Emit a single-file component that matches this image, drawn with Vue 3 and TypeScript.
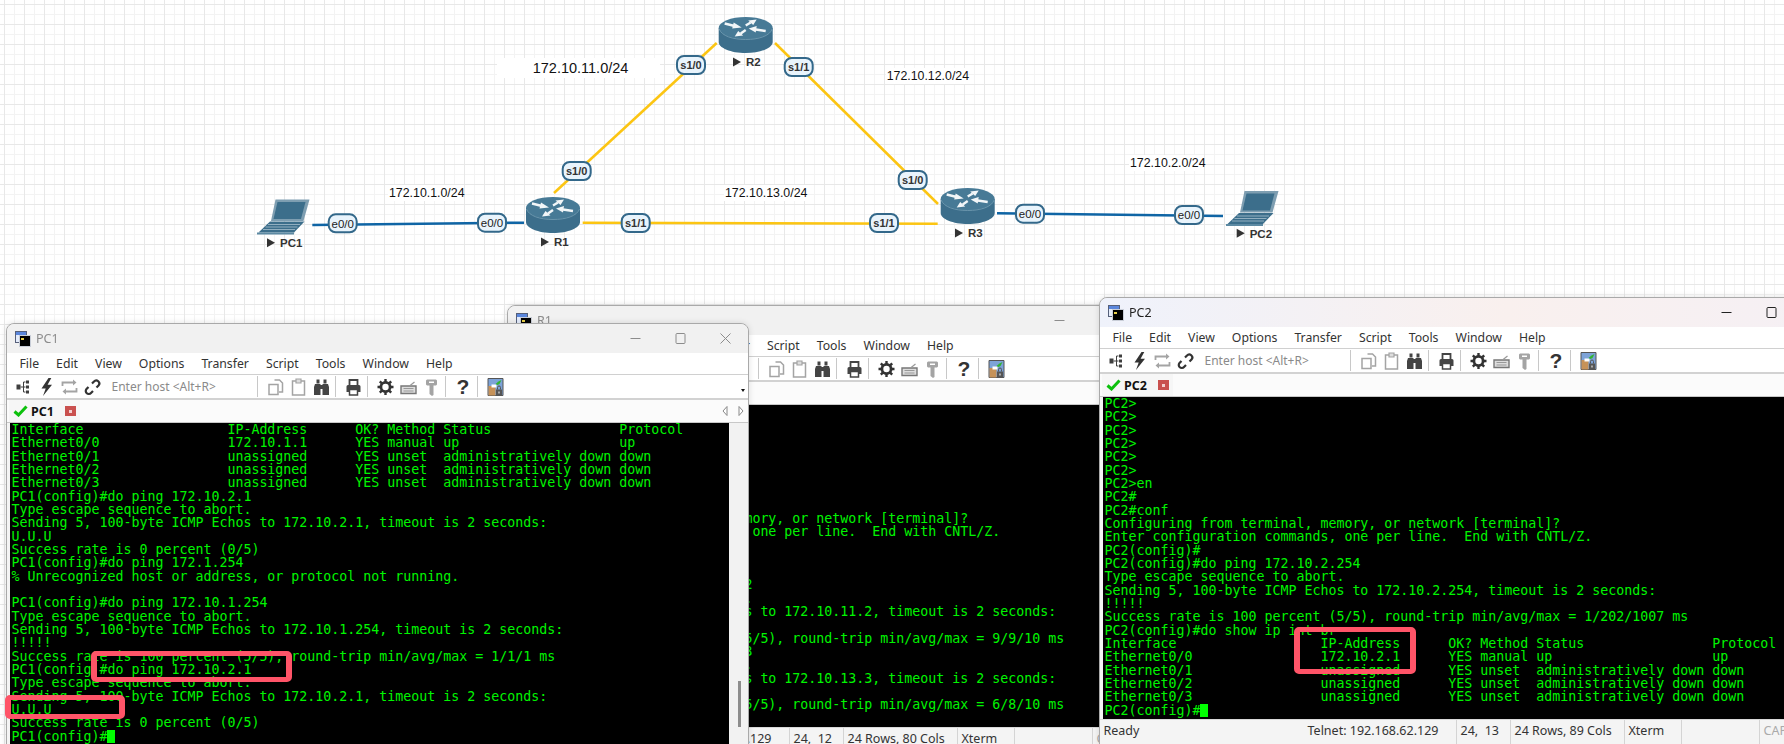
<script setup lang="ts">
type Shape = { d: string; fill?: string; stroke?: string; sw?: number }
type Tool = { key: string; shapes?: Shape[]; sep?: boolean; glyph?: string }

const ipRow = (name: string, ip: string, method: string, status: string, proto: string) =>
  name.padEnd(27) + ip.padEnd(16) + 'YES ' + method.padEnd(7) + status.padEnd(22) + proto

const header = 'Interface'.padEnd(27) + 'IP-Address'.padEnd(16) + 'OK? Method Status'.padEnd(33) + 'Protocol'
const adminDown = 'administratively down'

const pc1Lines = [
  header,
  ipRow('Ethernet0/0', '172.10.1.1', 'manual', 'up', 'up'),
  ipRow('Ethernet0/1', 'unassigned', 'unset', adminDown, 'down'),
  ipRow('Ethernet0/2', 'unassigned', 'unset', adminDown, 'down'),
  ipRow('Ethernet0/3', 'unassigned', 'unset', adminDown, 'down'),
  'PC1(config)#do ping 172.10.2.1',
  'Type escape sequence to abort.',
  'Sending 5, 100-byte ICMP Echos to 172.10.2.1, timeout is 2 seconds:',
  'U.U.U',
  'Success rate is 0 percent (0/5)',
  'PC1(config)#do ping 172.1.254',
  '% Unrecognized host or address, or protocol not running.',
  '',
  'PC1(config)#do ping 172.10.1.254',
  'Type escape sequence to abort.',
  'Sending 5, 100-byte ICMP Echos to 172.10.1.254, timeout is 2 seconds:',
  '!!!!!',
  'Success rate is 100 percent (5/5), round-trip min/avg/max = 1/1/1 ms',
  'PC1(config)#do ping 172.10.2.1',
  'Type escape sequence to abort.',
  'Sending 5, 100-byte ICMP Echos to 172.10.2.1, timeout is 2 seconds:',
  'U.U.U',
  'Success rate is 0 percent (0/5)',
  'PC1(config)#'
]

const r1Lines = [
  'R1>', 'R1>', 'R1>', 'R1>', 'R1>', 'R1>', 'R1>en', 'R1#conf',
  'Configuring from terminal, memory, or network [terminal]?',
  'Enter configuration commands, one per line.  End with CNTL/Z.',
  'R1(config)#',
  'R1(config)#',
  'R1(config)#',
  'R1(config)#do ping 172.10.11.2',
  'Type escape sequence to abort.',
  'Sending 5, 100-byte ICMP Echos to 172.10.11.2, timeout is 2 seconds:',
  '!!!!!',
  'Success rate is 100 percent (5/5), round-trip min/avg/max = 9/9/10 ms',
  'R1(config)#do ping 172.10.13.3',
  'Type escape sequence to abort.',
  'Sending 5, 100-byte ICMP Echos to 172.10.13.3, timeout is 2 seconds:',
  '!!!!!',
  'Success rate is 100 percent (5/5), round-trip min/avg/max = 6/8/10 ms',
  'R1(config)#'
]

const pc2Lines = [
  'PC2>', 'PC2>', 'PC2>', 'PC2>', 'PC2>', 'PC2>', 'PC2>en', 'PC2#', 'PC2#conf',
  'Configuring from terminal, memory, or network [terminal]?',
  'Enter configuration commands, one per line.  End with CNTL/Z.',
  'PC2(config)#',
  'PC2(config)#do ping 172.10.2.254',
  'Type escape sequence to abort.',
  'Sending 5, 100-byte ICMP Echos to 172.10.2.254, timeout is 2 seconds:',
  '!!!!!',
  'Success rate is 100 percent (5/5), round-trip min/avg/max = 1/202/1007 ms',
  'PC2(config)#do show ip int br',
  header,
  ipRow('Ethernet0/0', '172.10.2.1', 'manual', 'up', 'up'),
  ipRow('Ethernet0/1', 'unassigned', 'unset', adminDown, 'down'),
  ipRow('Ethernet0/2', 'unassigned', 'unset', adminDown, 'down'),
  ipRow('Ethernet0/3', 'unassigned', 'unset', adminDown, 'down'),
  'PC2(config)#'
]

const menus = ['File', 'Edit', 'View', 'Options', 'Transfer', 'Script', 'Tools', 'Window', 'Help']

const dark = '#3f3f3f'
const soft = '#a4a4a4'

const leftTools: Tool[] = [
  {
    key: 'connect',
    shapes: [
      { d: 'M3 7.500h4v5H3z', fill: dark },
      { d: 'M7 10h5M10 5v10M10 5h2M10 15h2', stroke: dark, sw: 1 },
      { d: 'M12.500 3.500h3v3h-3zM12.500 8.500h3v3h-3zM12.500 13.500h3v3h-3z', fill: dark }
    ]
  },
  { key: 'bolt', shapes: [{ d: 'M12 1 5 11.500h4.200L6.500 19 15.500 7.800h-4.400L14.800 1z', fill: '#333' }] },
  {
    key: 'reconnect',
    shapes: [
      { d: 'M3 9V5.500h12.500M17 11v3.500H4.500', stroke: soft, sw: 1.8 },
      { d: 'M13.500 2.500 17 5.500l-3.500 3zM6.500 11.500 3 14.500l3.500 3z', fill: soft }
    ]
  },
  {
    key: 'chain',
    shapes: [
      { d: 'M9.500 6.500 11.500 4.500a3 3 0 0 1 4.500 4L14 10.500', stroke: '#333', sw: 2.2 },
      { d: 'M10.500 14 8.500 16a3 3 0 0 1-4.500-4L6 10', stroke: '#333', sw: 2.2 }
    ]
  }
]

const rightTools: Tool[] = [
  { key: 's1', sep: true },
  {
    key: 'copy',
    shapes: [
      { d: 'M9 3h5l3 3v9h-3.500', stroke: soft, sw: 1.5 },
      { d: 'M3.500 7.500h9v10h-9z', stroke: soft, sw: 1.5, fill: '#fff' }
    ]
  },
  {
    key: 'paste',
    shapes: [
      { d: 'M4 4h12v14H4z', stroke: soft, sw: 1.5, fill: '#fff' },
      { d: 'M7.500 2h5v4h-5z', stroke: soft, sw: 1.2, fill: '#ddd' }
    ]
  },
  {
    key: 'bino',
    shapes: [
      {
        d: 'M5 2.500h3v4H5zM12 2.500h3v4h-3zM3.500 7h5.500v11H2.500V10zM11 7h5.500l1 3v8H11zM9 8h2v4H9z',
        fill: '#444'
      }
    ]
  },
  { key: 's2', sep: true },
  {
    key: 'print',
    shapes: [
      { d: 'M6 8V3h8v5', stroke: '#444', sw: 1.8 },
      { d: 'M4.500 8h11A1.500 1.500 0 0 1 17 9.500V15H3V9.500A1.500 1.500 0 0 1 4.500 8z', fill: '#444' },
      { d: 'M6 12.500h8V18H6z', fill: '#fff', stroke: '#444', sw: 1.5 }
    ]
  },
  { key: 's3', sep: true },
  {
    key: 'gear',
    shapes: [
      { d: 'M10 2v16M2 10h16M4.300 4.300l11.400 11.400M15.700 4.300 4.300 15.700', stroke: '#333', sw: 2.4 },
      { d: 'M10 4a6 6 0 1 0 0 12 6 6 0 0 0 0-12z', fill: '#333' },
      { d: 'M10 6.800a3.200 3.200 0 1 0 0 6.400 3.200 3.200 0 0 0 0-6.400z', fill: '#fff' }
    ]
  },
  {
    key: 'kbd',
    shapes: [
      { d: 'M2.500 9h15v7.500h-15z', fill: '#ddd', stroke: '#777', sw: 1.4 },
      { d: 'M5 11.500h10M5 14h10', stroke: '#999', sw: 1.2 },
      { d: 'M11 9 16 5', stroke: '#999', sw: 1.2 }
    ]
  },
  {
    key: 'key',
    shapes: [
      {
        d: 'M5.500 2.500h9l1 1v4l-1 1H12v9.500l-1.500 1L8 17V8.500H5.500l-1-1v-4z',
        fill: soft
      },
      { d: 'M7.500 4.500h5v1.500h-5z', fill: '#fff' }
    ]
  },
  { key: 's4', sep: true },
  { key: 'help', glyph: '?' },
  { key: 's5', sep: true },
  {
    key: 'sftp',
    shapes: [
      { d: 'M2.500 1.500h15v17h-15z', fill: '#7da3d8', stroke: '#555', sw: 1 },
      { d: 'M3 9h7v9.500H3z', fill: '#c69258' },
      { d: 'M6 7.500h5v3H6z', fill: '#fff' },
      { d: 'M10 7l3-2.500 3-1.500-2 4-2 1z', fill: '#31b531' },
      { d: 'M10.500 12.500h6V18h-6z', fill: '#555' },
      { d: 'M12 12.500v-2a1.500 1.500 0 0 1 3 0v2', stroke: '#555', sw: 1 },
      { d: 'M13 14.500h1v2h-1z', fill: '#fff' }
    ]
  }
]

const windows = [
  { id: 'r1', title: 'R1', cls: 'win-r1', lines: r1Lines, cursor: false, pos: '24,  12', size: '24 Rows, 80 Cols', showTab: false },
  { id: 'pc1', title: 'PC1', cls: 'win-pc1', lines: pc1Lines, cursor: true, pos: '24,  13', size: '24 Rows, 80 Cols', showTab: true },
  { id: 'pc2', title: 'PC2', cls: 'win-pc2', lines: pc2Lines, cursor: true, pos: '24,  13', size: '24 Rows, 89 Cols', showTab: true }
]

const yellow = [
  { x1: 554, y1: 193, x2: 716.7, y2: 43 },
  { x1: 775, y1: 43, x2: 938, y2: 204 },
  { x1: 582.7, y1: 222.7, x2: 937.7, y2: 223.7 }
]
const blue = [
  { x1: 312.3, y1: 225, x2: 524, y2: 222.7 },
  { x1: 997, y1: 213.3, x2: 1223, y2: 216 }
]
const badges = [
  { t: 's1/0', x: 576.7, y: 171, bold: true },
  { t: 's1/0', x: 691, y: 65, bold: true },
  { t: 's1/1', x: 798.7, y: 67, bold: true },
  { t: 's1/0', x: 912.7, y: 180, bold: true },
  { t: 's1/1', x: 635.7, y: 223, bold: true },
  { t: 's1/1', x: 884, y: 223, bold: true },
  { t: 'e0/0', x: 342.7, y: 223.3, bold: false },
  { t: 'e0/0', x: 492, y: 222.7, bold: false },
  { t: 'e0/0', x: 1030, y: 213.7, bold: false },
  { t: 'e0/0', x: 1189, y: 215, bold: false }
]
const nets = [
  { t: '172.10.11.0/24', x: 532.7, y: 73, big: true },
  { t: '172.10.12.0/24', x: 886.7, y: 80, big: false },
  { t: '172.10.13.0/24', x: 725, y: 197, big: false },
  { t: '172.10.1.0/24', x: 389, y: 197, big: false },
  { t: '172.10.2.0/24', x: 1130, y: 167, big: false }
]
const routers = [
  { name: 'R2', x: 718.7, y: 17, lx: 733, ly: 62 },
  { name: 'R1', x: 526, y: 197, lx: 541, ly: 242 },
  { name: 'R3', x: 940.7, y: 188, lx: 955, ly: 233 }
]
const laptops = [
  { name: 'PC1', x: 257, y: 199, lx: 267, ly: 242.7 },
  { name: 'PC2', x: 1226, y: 190.5, lx: 1236.7, ly: 233.3 }
]
const marks = [
  { id: 'm1', cls: 'mark-a' },
  { id: 'm2', cls: 'mark-b' },
  { id: 'm3', cls: 'mark-c' }
]
</script>

<template>
  <div class="desktop">
    <svg class="topology" width="1784" height="300" viewBox="0 0 1784 300">
      <rect x="497" y="58" width="163" height="20" fill="#fff" />
      <rect x="886" y="68" width="81" height="16" fill="#fff" />
      <rect x="724" y="185" width="81" height="16" fill="#fff" />
      <rect x="388" y="185" width="74" height="16" fill="#fff" />
      <rect x="1129" y="155" width="74" height="16" fill="#fff" />

      <line v-for="(l, i) in yellow" :key="'y' + i" :x1="l.x1" :y1="l.y1" :x2="l.x2" :y2="l.y2" stroke="#fcc512" stroke-width="2.500" />
      <line v-for="(l, i) in blue" :key="'b' + i" :x1="l.x1" :y1="l.y1" :x2="l.x2" :y2="l.y2" stroke="#0f65a5" stroke-width="2.500" />

      <g v-for="r in routers" :key="r.name">
        <g :transform="`translate(${r.x} ${r.y})`">
          <path d="M0 11V25C0 31 12 36 27 36S54 31 54 25V11Z" fill="#3c6e8b" />
          <ellipse cx="27" cy="11" rx="27" ry="11" fill="#477a96" />
          <path d="M0.500 12C3 19 14 22.500 27 22.500S51 19 53.500 12" fill="none" stroke="#6a95ac" stroke-width="1" />
          <path d="M6 6.500 16 9M47 14 37 12.500M27 8.500 32 5.500M27 13 22 16.500" fill="none" stroke="#f2f6f8" stroke-width="2.400" />
          <path d="M15 5.500 23 10.500 13.500 11.500ZM38 9 30 11.500 37 15.500ZM29.500 3.500 38 2.500 34.500 8ZM24.500 18.500 16 19.500 19.500 14Z" fill="#f2f6f8" />
        </g>
        <path :d="`M${r.lx} ${r.ly - 4.500}l8 4.500-8 4.500z`" fill="#333" />
        <text class="node-label" :x="r.lx + 13" :y="r.ly + 4.200">{{ r.name }}</text>
      </g>

      <g v-for="p in laptops" :key="p.name">
        <g :transform="`translate(${p.x} ${p.y})`">
          <path d="M18.500 .5H52.500L46.500 22H14Z" fill="#7e9eb1" />
          <path d="M20.500 3H48.500L44 20H16.500Z" fill="#3c6e8b" />
          <path d="M13 22.500H47.500L37 33.500H1.500Z" fill="#3c6e8b" />
          <path d="M11 25.500H43M8.500 28H40.500M6 30.500H38" stroke="#a8c0ce" stroke-width=".8" />
          <path d="M0 33.500H37V35.500H0Z" fill="#5d8aa3" />
        </g>
        <path :d="`M${p.lx} ${p.ly - 4.500}l8 4.500-8 4.500z`" fill="#333" />
        <text class="node-label" :x="p.lx + 13" :y="p.ly + 4.200">{{ p.name }}</text>
      </g>

      <g v-for="(b, i) in badges" :key="'badge' + i">
        <rect :x="b.x - 14" :y="b.y - 9" width="28" height="18" rx="7" fill="#e9f4fc" stroke="#33688a" stroke-width="2" />
        <text class="badge" :class="{ 'badge-bold': b.bold }" :x="b.x" :y="b.y + 4.200" text-anchor="middle">{{ b.t }}</text>
      </g>

      <text v-for="n in nets" :key="n.t" class="net" :class="{ 'net-big': n.big }" :x="n.x" :y="n.y">{{ n.t }}</text>
    </svg>

    <section v-for="w in windows" :key="w.id" class="window" :class="w.cls">
      <header class="titlebar">
        <svg class="app-icon" width="16" height="16" viewBox="0 0 16 16">
          <rect x=".5" y=".5" width="11" height="11" fill="#e4ecfb" stroke="#56607a" />
          <rect x="1" y="1" width="10" height="3" fill="#5a86dc" />
          <rect x="4.500" y="4.500" width="11" height="11" fill="#000" stroke="#c9ced8" />
          <rect x="6" y="7" width="3" height="2" fill="#e8d04a" />
        </svg>
        <span class="title-text">{{ w.title }}</span>
        <span class="controls">
          <svg width="45" height="29" viewBox="0 0 45 29"><path d="M17.500 14.500h10" stroke="currentColor" fill="none" /></svg>
          <svg width="45" height="29" viewBox="0 0 45 29"><rect x="18" y="9.500" width="9" height="10" rx="1" stroke="currentColor" fill="none" /></svg>
          <svg width="45" height="29" viewBox="0 0 45 29"><path d="M17.500 9.500l10 10M27.500 9.500l-10 10" stroke="currentColor" fill="none" /></svg>
        </span>
      </header>

      <nav class="menubar">
        <span v-for="m in menus" :key="m">{{ m }}</span>
      </nav>

      <div class="toolbar">
        <svg v-for="t in leftTools" :key="t.key" class="tool" width="23" height="20" viewBox="-1.500 0 23 20">
          <path v-for="(s, i) in t.shapes" :key="i" :d="s.d" :fill="s.fill ?? 'none'" :stroke="s.stroke" :stroke-width="s.sw" />
        </svg>
        <span class="host">Enter host &lt;Alt+R&gt;</span>
        <template v-for="t in rightTools" :key="t.key">
          <span v-if="t.sep" class="sep"></span>
          <span v-else-if="t.glyph" class="glyph">{{ t.glyph }}</span>
          <svg v-else class="tool" width="23" height="20" viewBox="-1.500 0 23 20">
            <path v-for="(s, i) in t.shapes" :key="i" :d="s.d" :fill="s.fill ?? 'none'" :stroke="s.stroke" :stroke-width="s.sw" />
          </svg>
        </template>
        <span class="drop"></span>
      </div>

      <div class="tabbar">
        <div v-if="w.showTab" class="tab">
          <svg width="15" height="12" viewBox="0 0 15 12"><path d="M1.500 6.500 5.500 10 13.500 1.500" fill="none" stroke="#0cc00c" stroke-width="3" /></svg>
          <b>{{ w.title }}</b>
          <span class="tab-close"><i></i></span>
        </div>
        <span class="tab-nav">
          <svg width="15" height="12" viewBox="0 0 15 12"><path d="M9 1.500 5 6l4 4.500z" fill="#fff" stroke="#888" /></svg>
          <svg width="15" height="12" viewBox="0 0 15 12"><path d="M6 1.500 10 6l-4 4.500z" fill="#fff" stroke="#888" /></svg>
        </span>
      </div>

      <div class="term-row">
        <div class="terminal">
          <div v-for="(line, i) in w.lines" :key="i" class="line">{{ line }}<span v-if="w.cursor && i === w.lines.length - 1" class="cursor"> </span></div>
        </div>
        <div class="scroll"><span class="thumb"></span></div>
      </div>

      <footer class="status">
        <span class="cell grow">Ready</span>
        <span class="cell conn">Telnet: 192.168.62.129</span>
        <span class="cell pos">{{ w.pos }}</span>
        <span class="cell size">{{ w.size }}</span>
        <span class="cell kind">Xterm</span>
        <span class="cell blank"></span>
        <span class="cell cap">CAP</span>
      </footer>
    </section>

    <span v-for="m in marks" :key="m.id" class="mark" :class="m.cls"></span>
  </div>
</template>

<style scoped>
.desktop {
  position: relative;
  width: 1784px;
  height: 744px;
  overflow: hidden;
  background-color: #fff;
  background-image:
    linear-gradient(#e8e8e8 1px, transparent 1px),
    linear-gradient(90deg, #e8e8e8 1px, transparent 1px),
    linear-gradient(#f3f3f3 1px, transparent 1px),
    linear-gradient(90deg, #f3f3f3 1px, transparent 1px);
  background-size: 20px 20px, 20px 20px, 10px 10px, 10px 10px;
  background-position: 0 4px, 4px 0, 0 4px, 4px 0;
}
.topology {
  position: absolute;
  left: 0;
  top: 0;
}
.node-label {
  font: bold 11.500px "Liberation Sans", Arial, sans-serif;
  fill: #333;
}
.badge {
  font: 11.500px "Liberation Sans", Arial, sans-serif;
  fill: #222;
}
.badge-bold {
  font-weight: bold;
  font-size: 11px;
  fill: #333;
}
.net {
  font: 12.350px "Liberation Sans", Arial, sans-serif;
  fill: #111;
}
.net-big {
  font-size: 14.500px;
}

.window {
  position: absolute;
  display: flex;
  flex-direction: column;
  box-sizing: border-box;
  background: #f4f4f4;
  border: 1px solid #a9a9a9;
  border-radius: 8px 8px 0 0;
  font: 12px "Noto Sans", "Open Sans", sans-serif;
  color: #333;
  box-shadow: 0 0 6px rgba(0, 0, 0, .12);
  filter: blur(.3px);
}
.win-r1 { left: 507px; top: 305px; width: 666px; }
.win-pc1 { left: 6px; top: 323px; width: 743px; }
.win-pc2 { left: 1099px; top: 297px; width: 741px; }

.titlebar {
  display: flex;
  align-items: center;
  height: 29px;
  padding-left: 8px;
  border-radius: 8px 8px 0 0;
  background: #f1f1f1;
  color: #8c8c8c;
}
.win-pc2 .titlebar {
  background: linear-gradient(90deg, #eff2fb, #f9f0ee 55%, #f5f0f5);
  color: #222;
}
.title-text {
  margin-left: 5px;
  font-size: 12.500px;
}
.controls {
  display: flex;
  margin-left: auto;
}
.menubar {
  display: flex;
  align-items: center;
  gap: 17px;
  height: 21px;
  padding-left: 12.500px;
  background: #fff;
  border-bottom: 1px solid #d0d0d0;
  font-size: 12.250px;
}
.toolbar {
  display: flex;
  align-items: center;
  height: 23px;
  padding-left: 5px;
  background: #fff;
  border-bottom: 2px solid #d2d2d2;
}
.tool {
  flex: none;
}
.host {
  flex: none;
  box-sizing: border-box;
  width: 150.500px;
  padding-left: 7.500px;
  color: #8a8a8a;
  font-size: 12px;
}
.sep {
  flex: none;
  width: 1px;
  height: 21px;
  margin: 0 6px 0 2px;
  background: #c8c8c8;
}
.glyph {
  flex: none;
  width: 23px;
  text-align: center;
  font: bold 21px "Liberation Sans", Arial, sans-serif;
  color: #333;
}
.drop {
  margin: 8px 3px 0 auto;
  border-left: 2.500px solid transparent;
  border-right: 2.500px solid transparent;
  border-top: 3px solid #111;
}
.tabbar {
  display: flex;
  align-items: stretch;
  height: 22px;
  background: #fbfbfb;
  border-bottom: 1px solid #c8c8c8;
}
.tab {
  display: flex;
  align-items: center;
  width: 71px;
  margin-left: 2px;
  padding-left: 4px;
  box-sizing: border-box;
  background: #f6f6f6;
  font-size: 12.500px;
  color: #111;
}
.tab b {
  margin-left: 3px;
}
.tab-close {
  display: flex;
  align-items: center;
  justify-content: center;
  width: 11px;
  height: 10px;
  margin-left: 11px;
  background: #c9504e;
}
.tab-close i {
  width: 3px;
  height: 3px;
  background: #f3cfcf;
}
.tab-nav {
  display: flex;
  align-items: center;
  margin-left: auto;
}
.term-row {
  display: flex;
  padding-left: 2.500px;
}
.terminal {
  flex: 1;
  min-width: 0;
  box-sizing: border-box;
  padding: 0 0 2px 2px;
  overflow: hidden;
  background: #000;
  color: #00f500;
  font: 13.290px "DejaVu Sans Mono", "Liberation Mono", monospace;
}
.line {
  height: 13.333px;
  line-height: 13.333px;
  white-space: pre;
}
.cursor {
  display: inline-block;
  width: 8px;
  height: 13.333px;
  vertical-align: top;
  background: #00ff00;
}
.scroll {
  position: relative;
  flex: none;
  width: 19px;
  background: #f2f2f2;
}
.thumb {
  position: absolute;
  left: 9px;
  bottom: 18px;
  width: 2.500px;
  height: 46px;
  background: #8d8d8d;
}
.status {
  display: flex;
  height: 24px;
  background: #f4f4f4;
  border-top: 1px solid #d8d8d8;
  font-size: 12.500px;
}
.cell {
  flex: none;
  box-sizing: border-box;
  padding: 2px 0 0 3.500px;
  border-left: 1px solid #d4d4d4;
  white-space: pre;
}
.grow {
  flex: 1;
  min-width: 0;
  border-left: none;
}
.conn { width: 152px; border-left: none; }
.pos { width: 54px; }
.size { width: 114px; }
.kind { width: 57px; }
.blank { width: 78px; }
.cap { width: 80px; color: #aaa; }

.mark {
  position: absolute;
  box-sizing: border-box;
  border: 5px solid #ff5468;
  border-left-width: 6px;
  border-right-width: 6px;
  border-radius: 5px;
}
.mark-a { left: 91px; top: 651px; width: 201px; height: 31px; }
.mark-b { left: 5px; top: 695px; width: 120px; height: 24px; }
.mark-c { left: 1294px; top: 627px; width: 122px; height: 47px; }
</style>
